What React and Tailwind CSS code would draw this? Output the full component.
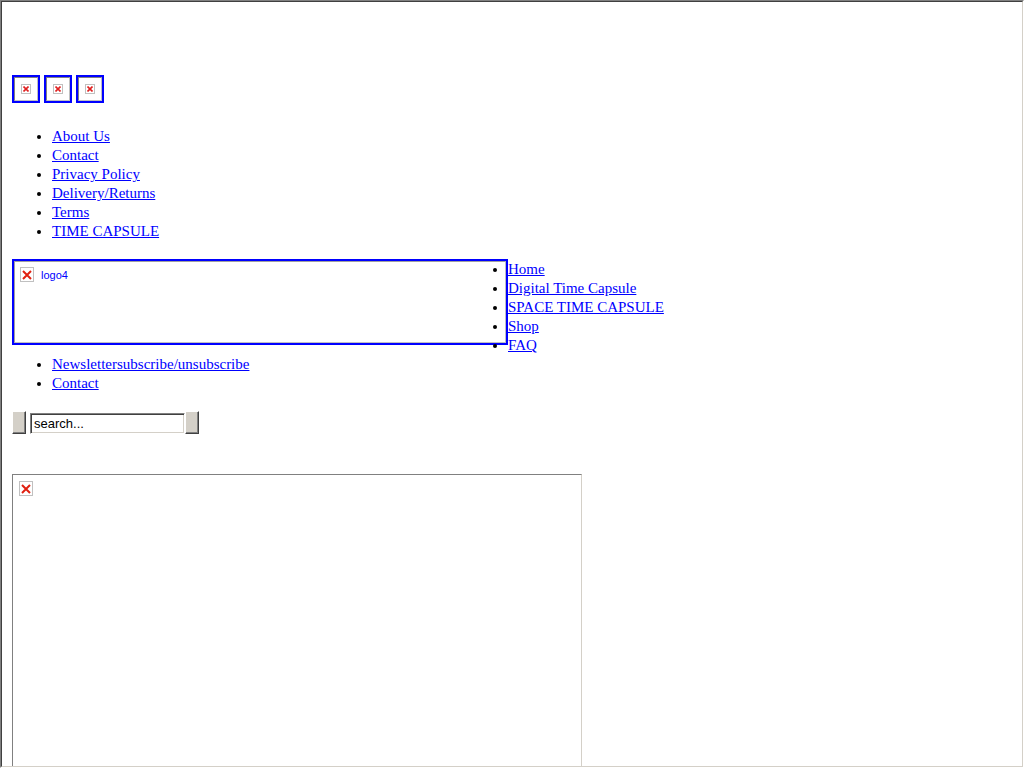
import React from "react";

function SmallBroken() {
  return (
    <div className="w-[10px] h-[10px] border border-[#c0c0c0] bg-white flex items-center justify-center">
      <svg width="6" height="6" viewBox="0 0 6 6">
        <path d="M0.5 0.5 L5.5 5.5 M5.5 0.5 L0.5 5.5" stroke="#e02020" strokeWidth="1.6" />
      </svg>
    </div>
  );
}

function BigBroken() {
  return (
    <div className="w-[14px] h-[15px] border border-[#c0c0c0] bg-white flex items-center justify-center shrink-0">
      <svg width="10" height="10" viewBox="0 0 10 10">
        <path d="M1 1 L9 9 M9 1 L1 9" stroke="#e02010" strokeWidth="2" />
      </svg>
    </div>
  );
}

function IconBox() {
  return (
    <div className="w-[28px] h-[28px] border-2 border-[#0000ff]">
      <div className="w-full h-full border border-t-[#808080] border-l-[#808080] border-r-[#c0c0c0] border-b-[#c0c0c0] bg-white flex items-center justify-center">
        <SmallBroken />
      </div>
    </div>
  );
}

const linkCls = "text-[#0000ff] underline";

export default function App() {
  const list1 = ["About Us", "Contact", "Privacy Policy", "Delivery/Returns", "Terms", "TIME CAPSULE"];
  const list2 = ["Home", "Digital Time Capsule", "SPACE TIME CAPSULE", "Shop", "FAQ"];
  const list3 = ["Newslettersubscribe/unsubscribe", "Contact"];
  return (
    <div className="w-[1024px] h-[768px] overflow-hidden border border-t-[#808080] border-l-[#808080] border-r-white border-b-white bg-white">
      <div className="h-full overflow-hidden border border-t-[#404040] border-l-[#404040] border-r-[#d4d0c8] border-b-[#d4d0c8] bg-white pl-[10px] pt-[73px] font-['Liberation_Serif',serif] text-[15px] leading-[19px] text-black">
        <div className="flex gap-[4px]">
          <IconBox />
          <IconBox />
          <IconBox />
        </div>

        <ul className="mt-[24px] pl-[40px] list-disc">
          {list1.map((t) => (
            <li key={t}>
              <a href="#" className={linkCls}>{t}</a>
            </li>
          ))}
        </ul>

        <div className="mt-[18px] flex items-start">
          <div className="w-[496px] h-[86px] border-2 border-[#0000ff] shrink-0">
            <div className="w-full h-full border border-t-[#a0a0a0] border-l-[#a0a0a0] border-r-[#c0c0c0] border-b-[#c0c0c0] bg-white pl-[5px] pt-[5px] flex items-start gap-[7px]">
              <BigBroken />
              <span className="font-['Liberation_Sans',sans-serif] text-[11px] leading-[14px] text-[#0000ff] mt-[1px]">logo4</span>
            </div>
          </div>
          <ul className="mt-[1px] pl-0 list-disc">
            {list2.map((t) => (
              <li key={t}>
                <a href="#" className={linkCls}>{t}</a>
              </li>
            ))}
          </ul>
        </div>

        <ul className="pl-[40px] list-disc">
          {list3.map((t) => (
            <li key={t}>
              <a href="#" className={linkCls}>{t}</a>
            </li>
          ))}
        </ul>

        <div className="mt-[18px] flex items-end">
          <div className="w-[14px] h-[23px] bg-[#d4d0c8] border border-t-white border-l-white border-r-[#404040] border-b-[#404040] shadow-[inset_-1px_-1px_#808080]" />
          <div className="ml-[4px] w-[155px] h-[21px] border border-t-[#808080] border-l-[#808080] border-r-white border-b-white shadow-[inset_1px_1px_#404040,inset_-1px_-1px_#d4d0c8] bg-white pl-[3px] font-['Liberation_Sans',sans-serif] text-[13px] leading-[19px] text-black">
            search...
          </div>
          <div className="w-[14px] h-[23px] bg-[#d4d0c8] border border-t-white border-l-white border-r-[#404040] border-b-[#404040] shadow-[inset_-1px_-1px_#808080]" />
        </div>

        <div className="mt-[40px] w-[570px] h-[400px] border border-t-[#808080] border-l-[#808080] border-r-[#d4d0c8] border-b-[#d4d0c8] bg-white pl-[6px] pt-[6px]">
          <BigBroken />
        </div>
      </div>
    </div>
  );
}
